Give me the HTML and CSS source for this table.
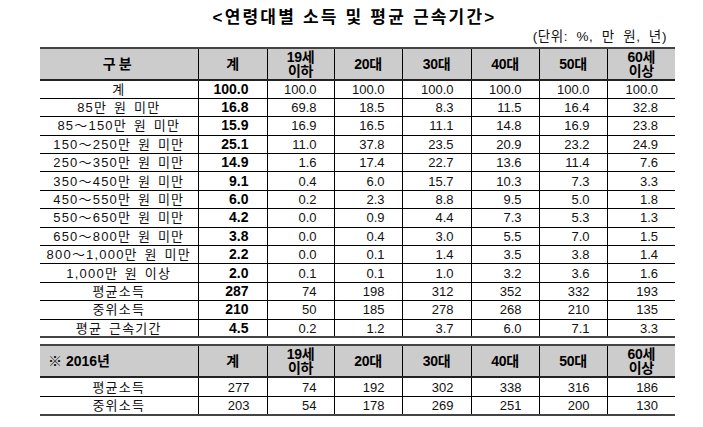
FILE: index.html
```html
<!DOCTYPE html>
<html lang="ko">
<head>
<meta charset="utf-8">
<link rel="stylesheet" href="styles.css">
</head>
<body>
<div class="page">
  <h1 class="title">&lt;연령대별 소득 및 평균 근속기간&gt;</h1>
  <p class="unit">(단위: %, 만 원, 년)</p>
  <table class="stats main">
    <colgroup>
      <col class="c-label"><col class="c-total"><col class="c-19"><col class="c-n"><col class="c-total"><col class="c-n"><col class="c-n"><col class="c-n">
    </colgroup>
    <thead>
      <tr><th class="h-label">구분</th><th>계</th><th class="two">19세<br>이하</th><th>20대</th><th>30대</th><th>40대</th><th>50대</th><th class="two">60세<br>이상</th></tr>
    </thead>
    <tbody>
      <tr><td class="lbl">계</td><td class="tot">100.0</td><td>100.0</td><td>100.0</td><td>100.0</td><td>100.0</td><td>100.0</td><td>100.0</td></tr>
      <tr><td class="lbl">85만 원 미만</td><td class="tot">16.8</td><td>69.8</td><td>18.5</td><td>8.3</td><td>11.5</td><td>16.4</td><td>32.8</td></tr>
      <tr><td class="lbl">85～150만 원 미만</td><td class="tot">15.9</td><td>16.9</td><td>16.5</td><td>11.1</td><td>14.8</td><td>16.9</td><td>23.8</td></tr>
      <tr><td class="lbl">150～250만 원 미만</td><td class="tot">25.1</td><td>11.0</td><td>37.8</td><td>23.5</td><td>20.9</td><td>23.2</td><td>24.9</td></tr>
      <tr><td class="lbl">250～350만 원 미만</td><td class="tot">14.9</td><td>1.6</td><td>17.4</td><td>22.7</td><td>13.6</td><td>11.4</td><td>7.6</td></tr>
      <tr><td class="lbl">350～450만 원 미만</td><td class="tot">9.1</td><td>0.4</td><td>6.0</td><td>15.7</td><td>10.3</td><td>7.3</td><td>3.3</td></tr>
      <tr><td class="lbl">450～550만 원 미만</td><td class="tot">6.0</td><td>0.2</td><td>2.3</td><td>8.8</td><td>9.5</td><td>5.0</td><td>1.8</td></tr>
      <tr><td class="lbl">550～650만 원 미만</td><td class="tot">4.2</td><td>0.0</td><td>0.9</td><td>4.4</td><td>7.3</td><td>5.3</td><td>1.3</td></tr>
      <tr><td class="lbl">650～800만 원 미만</td><td class="tot">3.8</td><td>0.0</td><td>0.4</td><td>3.0</td><td>5.5</td><td>7.0</td><td>1.5</td></tr>
      <tr><td class="lbl">800～1,000만 원 미만</td><td class="tot">2.2</td><td>0.0</td><td>0.1</td><td>1.4</td><td>3.5</td><td>3.8</td><td>1.4</td></tr>
      <tr><td class="lbl">1,000만 원 이상</td><td class="tot">2.0</td><td>0.1</td><td>0.1</td><td>1.0</td><td>3.2</td><td>3.6</td><td>1.6</td></tr>
      <tr><td class="lbl">평균소득</td><td class="tot">287</td><td>74</td><td>198</td><td>312</td><td>352</td><td>332</td><td>193</td></tr>
      <tr><td class="lbl">중위소득</td><td class="tot">210</td><td>50</td><td>185</td><td>278</td><td>268</td><td>210</td><td>135</td></tr>
      <tr><td class="lbl">평균 근속기간</td><td class="tot">4.5</td><td>0.2</td><td>1.2</td><td>3.7</td><td>6.0</td><td>7.1</td><td>3.3</td></tr>
    </tbody>
  </table>
  <table class="stats prev">
    <colgroup>
      <col class="c-label"><col class="c-total"><col class="c-19"><col class="c-n"><col class="c-total"><col class="c-n"><col class="c-n"><col class="c-n">
    </colgroup>
    <thead>
      <tr><th class="h-year">※ 2016년</th><th>계</th><th class="two">19세<br>이하</th><th>20대</th><th>30대</th><th>40대</th><th>50대</th><th class="two">60세<br>이상</th></tr>
    </thead>
    <tbody>
      <tr><td class="lbl">평균소득</td><td>277</td><td>74</td><td>192</td><td>302</td><td>338</td><td>316</td><td>186</td></tr>
      <tr><td class="lbl">중위소득</td><td>203</td><td>54</td><td>178</td><td>269</td><td>251</td><td>200</td><td>130</td></tr>
    </tbody>
  </table>
</div>
</body>
</html>
```

FILE: styles.css
```css
html, body {
  margin: 0;
  padding: 0;
  background: #fff;
}

body {
  font-family: "Liberation Sans", "Noto Sans CJK KR", sans-serif;
  color: #000;
}

.page {
  width: 635px;
  margin-left: 40px;
}

.title {
  margin: 0;
  padding-top: 8px;
  font-size: 17px;
  line-height: 20px;
  font-weight: bold;
  text-align: center;
  letter-spacing: 2.2px;
  padding-right: 6px;
}

.unit {
  margin: 2px 0 0;
  font-size: 13.5px;
  line-height: 14px;
  text-align: right;
  padding-right: 8px;
  letter-spacing: 0.6px;
  word-spacing: 4px;
  color: #111;
}

.stats {
  width: 635px;
  border-collapse: collapse;
  table-layout: fixed;
}

.main {
  margin-top: 3px;
}

.prev {
  margin-top: 6px;
}

.c-label { width: 158px; }
.c-total { width: 69px; }
.c-19 { width: 67px; }
.c-n { width: 68px; }

.stats thead tr {
  border-top: 2px solid #444;
  border-bottom: 2px solid #222;
  height: 32px;
}

.stats th {
  background: #cccccc;
  font-size: 14px;
  line-height: 14px;
  font-weight: bold;
  padding: 0;
  text-align: center;
  border-left: 1px solid #000;
  letter-spacing: -0.3px;
}

.stats th.two {
  line-height: 14.5px;
}

.stats th:first-child,
.stats td:first-child {
  border-left: none;
}

.stats .h-label {
  letter-spacing: 3px;
}

.stats .h-year {
  text-align: left;
  padding-left: 8px;
  letter-spacing: 0;
}

.stats tbody tr {
  height: 18.4px;
}

.prev tbody tr {
  height: 19px;
}

.stats tbody tr:last-child {
  border-bottom: 2px solid #444;
}

.stats td {
  padding: 0 17px 0 0;
  font-size: 13px;
  line-height: 15px;
  text-align: right;
  border-left: 1px solid #000;
  border-top: 1px solid #000;
  color: #111;
}

.stats tbody tr:first-child td {
  border-top: none;
}

.stats td.lbl {
  text-align: center;
  padding: 0;
  letter-spacing: 1.2px;
  word-spacing: 2px;
  white-space: nowrap;
}

.stats td.tot {
  font-weight: bold;
  font-size: 14px;
  color: #000;
  padding-right: 18px;
}
```
